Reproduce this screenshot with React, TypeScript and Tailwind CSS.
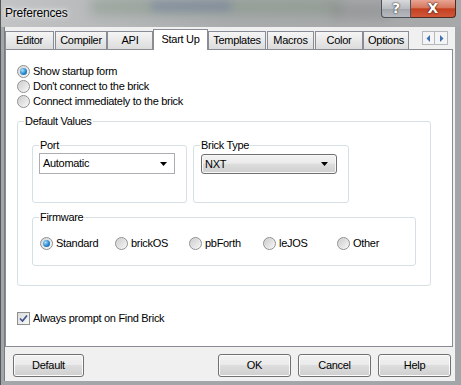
import React from 'react';

function Radio({ checked }: { checked?: boolean }) {
  return (
    <span className="flex w-[13px] h-[13px] shrink-0 items-center justify-center rounded-full border border-[#8e8f8f] bg-linear-to-br from-[#d4d4d4] to-[#fbfbfb]">
      {checked ? (
        <span className="w-[7px] h-[7px] rounded-full bg-[radial-gradient(circle_at_35%_35%,#a9e0ff,#2a86cc_55%,#0d4f8e)]" />
      ) : (
        <span className="w-[9px] h-[9px] rounded-full bg-linear-to-br from-[#cfcfcf] to-[#f4f4f4]" />
      )}
    </span>
  );
}

function RadioRow({ label, checked }: { label: string; checked?: boolean }) {
  return (
    <div className="flex h-[15px] items-center">
      <Radio checked={checked} />
      <span className="ml-[3px]">{label}</span>
    </div>
  );
}

function Tab({ label, w, ml, selected }: { label: string; w: number; ml: number; selected?: boolean }) {
  if (selected) {
    return (
      <div
        className="relative z-10 mt-[2px] flex h-[21px] justify-center border border-b-0 border-[#898c95] bg-white pt-[3px]"
        style={{ width: w, marginLeft: ml }}
      >
        {label}
      </div>
    );
  }
  return (
    <div
      className="mt-[4px] flex h-[18px] items-center justify-center border border-b-0 border-[#898c95] bg-linear-to-b from-[#f5f5f5] to-[#dcdcdc]"
      style={{ width: w, marginLeft: ml }}
    >
      {label}
    </div>
  );
}

function Button({ label, w, ml }: { label: string; w: number; ml: number }) {
  return (
    <div
      className="flex h-[23px] items-center justify-center rounded-[3px] border border-[#707070] bg-[linear-gradient(#f2f2f2_0%,#ebebeb_45%,#dddddd_50%,#cfcfcf_100%)] shadow-[inset_0_0_0_1px_#fcfcfc]"
      style={{ width: w, marginLeft: ml }}
    >
      {label}
    </div>
  );
}

function Arrow({ dir }: { dir: 'l' | 'r' }) {
  return (
    <svg width="5" height="7" viewBox="0 0 5 7">
      {dir === 'l' ? <path d="M4 0 L4 7 L0.5 3.5 Z" fill="#3c6fb6" /> : <path d="M1 0 L1 7 L4.5 3.5 Z" fill="#3c6fb6" />}
    </svg>
  );
}

export default function App() {
  return (
    <div className="relative flex h-[385px] w-[461px] flex-col overflow-hidden border-l border-[#55585b] bg-[#a3a6a9] font-['Liberation_Sans',Arial,sans-serif] text-[11px] leading-[13px] tracking-[-0.3px] text-black">
      {/* title bar */}
      <div className="relative flex h-[27px] items-start bg-linear-to-r from-[#c2c4c5] via-[#a9abad] to-[#a6a8aa]">
        <div className="pointer-events-none absolute left-[90px] top-[0px] h-[14px] w-[250px] bg-[#6f8a70] opacity-40 blur-[6px]" />
        <div className="pointer-events-none absolute left-[150px] top-[2px] h-[8px] w-[80px] bg-[#5663a6] opacity-40 blur-[5px]" />
        <div className="pointer-events-none absolute left-[330px] top-[4px] h-[14px] w-[60px] bg-[#7e7e7e] opacity-40 blur-[6px]" />
        <span className="relative ml-[4px] mt-[6px] text-[12px] leading-[15px] tracking-[-0.2px] [text-shadow:0_0_6px_#ffffff,0_0_3px_#ffffff]">
          Preferences
        </span>
        <div className="relative ml-auto mr-[5px] flex h-[18px]">
          <div className="flex h-[18px] w-[30px] items-center justify-center rounded-bl-[4px] border border-t-0 border-[#4d5054] bg-[linear-gradient(#d7d9dc_0%,#b9bcc0_50%,#a2a6ab_51%,#b6babf_100%)] font-['DejaVu_Sans',sans-serif] text-[14px] font-bold text-white [text-shadow:0_0_1px_#333,0_0_2px_#333]">
            ?
          </div>
          <div className="flex h-[18px] w-[45px] items-center justify-center rounded-br-[4px] border border-l-0 border-t-0 border-[#4d2a22] bg-[linear-gradient(#e8a493_0%,#d6775f_45%,#c4401f_52%,#d1573a_100%)] font-['DejaVu_Sans',sans-serif] text-[14px] font-bold tracking-normal text-white [text-shadow:0_0_1px_#3a1208,0_0_2px_#3a1208]">
            X
          </div>
        </div>
      </div>

      {/* frame + client */}
      <div className="flex flex-1 pb-[4px] pl-[3px] pr-[6px]">
        <div className="flex flex-1 flex-col bg-[#f0f0f0] shadow-[inset_1px_0_0_#7a7d80]">
          {/* tabs */}
          <div className="flex h-[22px] items-start">
            <Tab label="Editor" w={49} ml={1} />
            <Tab label="Compiler" w={52} ml={1} />
            <Tab label="API" w={46} ml={0} />
            <Tab label="Start Up" w={55} ml={0} selected />
            <Tab label="Templates" w={58} ml={0} />
            <Tab label="Macros" w={47} ml={1} />
            <Tab label="Color" w={48} ml={1} />
            <Tab label="Options" w={46} ml={0} />
            <div className="ml-[13px] mt-[4px] flex">
              <div className="flex h-[14px] w-[13px] items-center justify-center border border-[#b5b8bd] bg-[#f4f4f4]">
                <Arrow dir="l" />
              </div>
              <div className="flex h-[14px] w-[13px] items-center justify-center border border-l-0 border-[#b5b8bd] bg-[#f4f4f4]">
                <Arrow dir="r" />
              </div>
            </div>
          </div>

          {/* panel */}
          <div className="ml-[1px] flex h-[298px] w-[448px] flex-col border border-[#898c95] bg-white">
            <div className="ml-[11px] mt-[14px] flex flex-col">
              <RadioRow label="Show startup form" checked />
              <RadioRow label="Don't connect to the brick" />
              <RadioRow label="Connect immediately to the brick" />
            </div>

            <fieldset className="ml-[11px] mt-[6px] h-[171px] w-[414px] min-w-0 rounded-[3px] border border-[#d5dfe5]">
              <legend className="ml-[6px] px-[1px] leading-[13px]">Default Values</legend>
              <div className="ml-[14px] mt-[11px] flex">
                <fieldset className="h-[64px] w-[155px] min-w-0 rounded-[3px] border border-[#d5dfe5]">
                  <legend className="ml-[6px] px-[1px] leading-[13px]">Port</legend>
                  <div className="ml-[6px] mt-[1px] flex h-[21px] w-[136px] items-center border border-[#abadb3] bg-white pl-[3px] pr-[7px]">
                    <span>Automatic</span>
                    <svg className="ml-auto" width="7" height="4" viewBox="0 0 7 4">
                      <path d="M0 0 H7 L3.5 4 Z" fill="#000" />
                    </svg>
                  </div>
                </fieldset>
                <fieldset className="ml-[6px] h-[64px] w-[156px] min-w-0 rounded-[3px] border border-[#d5dfe5]">
                  <legend className="ml-[6px] px-[1px] leading-[13px]">Brick Type</legend>
                  <div className="ml-[7px] mt-[2px] flex h-[20px] w-[136px] items-center rounded-[3px] border border-[#707070] bg-[linear-gradient(#f2f2f2_0%,#ebebeb_45%,#dddddd_50%,#cfcfcf_100%)] pl-[3px] pr-[8px] shadow-[inset_0_0_0_1px_#f8f8f8]">
                    <span>NXT</span>
                    <svg className="ml-auto" width="7" height="4" viewBox="0 0 7 4">
                      <path d="M0 0 H7 L3.5 4 Z" fill="#000" />
                    </svg>
                  </div>
                </fieldset>
              </div>

              <fieldset className="ml-[14px] mt-[8px] h-[55px] w-[384px] min-w-0 rounded-[3px] border border-[#d5dfe5]">
                <legend className="ml-[6px] px-[1px] leading-[13px]">Firmware</legend>
                <div className="ml-[7px] mt-[12px] flex">
                  <div className="w-[75px]"><RadioRow label="Standard" checked /></div>
                  <div className="w-[74px]"><RadioRow label="brickOS" /></div>
                  <div className="w-[74px]"><RadioRow label="pbForth" /></div>
                  <div className="w-[74px]"><RadioRow label="leJOS" /></div>
                  <div className="w-[60px]"><RadioRow label="Other" /></div>
                </div>
              </fieldset>
            </fieldset>

            <div className="ml-[11px] mt-[25px] flex h-[14px] items-center">
              <span className="flex h-[13px] w-[13px] items-center justify-center border border-[#8e8f8f] bg-linear-to-br from-[#dcdcdc] to-[#f8f8f8]">
                <svg width="9" height="9" viewBox="0 0 9 9">
                  <path d="M1 4.5 L3.5 7 L8 1.5" stroke="#3b4f8a" strokeWidth="1.6" fill="none" />
                </svg>
              </span>
              <span className="ml-[3px]">Always prompt on Find Brick</span>
            </div>
          </div>

          {/* buttons */}
          <div className="mt-[7px] flex">
            <Button label="Default" w={71} ml={9} />
            <Button label="OK" w={73} ml={134} />
            <Button label="Cancel" w={73} ml={7} />
            <Button label="Help" w={73} ml={7} />
          </div>
        </div>
      </div>
    </div>
  );
}
